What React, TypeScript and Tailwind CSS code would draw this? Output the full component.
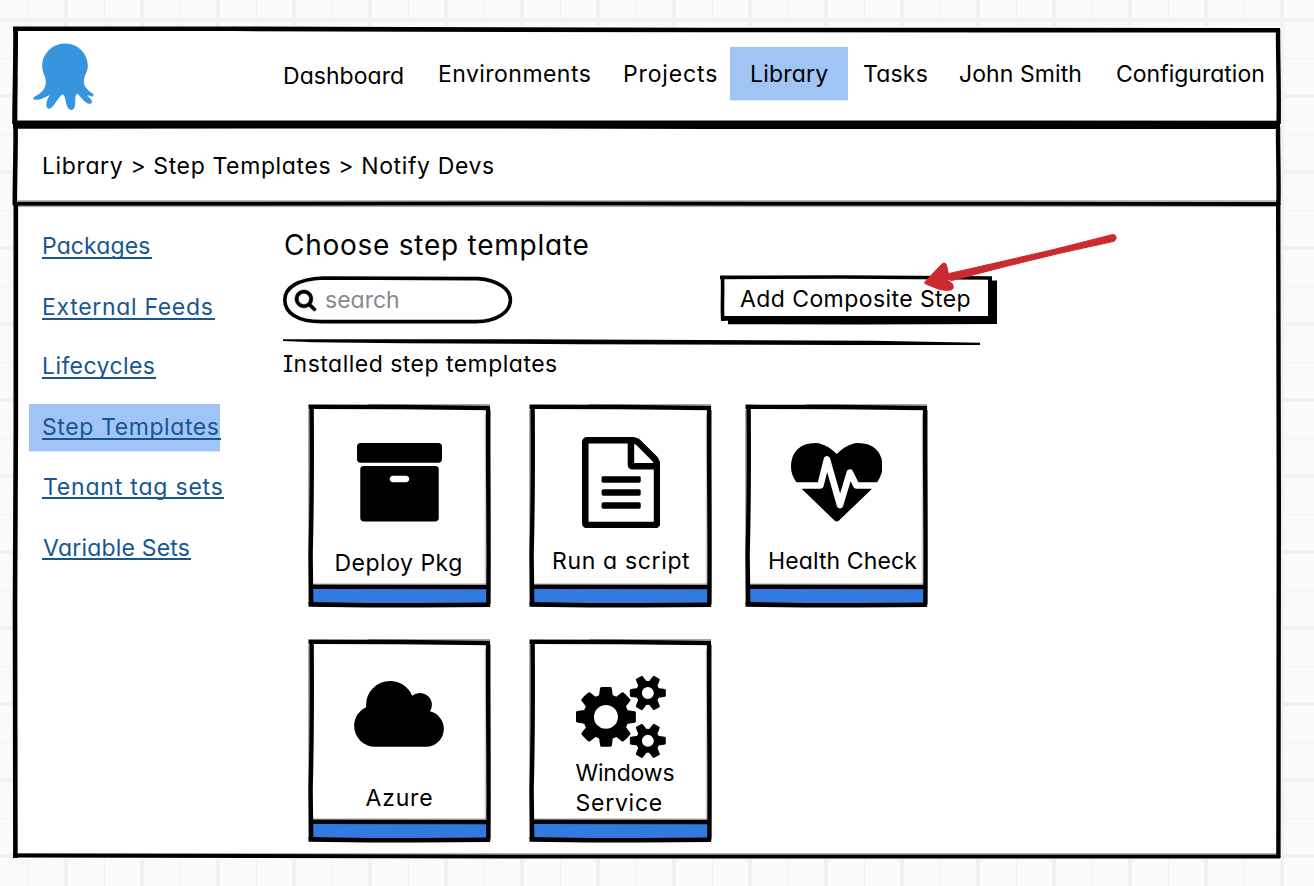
import type { ReactNode } from "react";

type Stroke = { d: string; w?: number; o?: number };

/* Hand-drawn ink strokes laid over a box. */
function Ink({ w, h, strokes }: { w: number; h: number; strokes: Stroke[] }) {
  return (
    <svg
      className="pointer-events-none absolute top-0 left-0 overflow-visible"
      width={w}
      height={h}
      viewBox={`0 0 ${w} ${h}`}
      fill="none"
      stroke="#000"
      aria-hidden="true"
    >
      {strokes.map((s) => (
        <path key={s.d} d={s.d} strokeWidth={s.w ?? 4} strokeOpacity={s.o ?? 1} />
      ))}
    </svg>
  );
}

const headerInk: Stroke[] = [
  { d: "M-1 2.8L220 2.8L400 3.4L700 4L1266 4.2", w: 4.6 },
  { d: "M1.6 2C1.8 40 0.6 70 0.6 98", w: 4.8 },
  { d: "M3.4 50V96", w: 1.4, o: 0.3 },
  { d: "M1264 3C1264 35 1265.2 65 1264.6 98", w: 4.4 },
  { d: "M-1 97L1266 97.2", w: 4.6 },
  { d: "M0 94.5H1266", w: 1, o: 0.3 },
];

const crumbInk: Stroke[] = [
  { d: "M-1 2.6L400 2.2L700 2.9L1266 2.8", w: 4.4 },
  { d: "M1.6 2C1.8 30 0.8 55 0.8 81", w: 4.6 },
  { d: "M1264 3C1264 30 1265 55 1264.4 81", w: 4.4 },
  { d: "M-1 79.7L500 79.6L1266 80", w: 4 },
  { d: "M4 77H1264", w: 2, o: 0.25 },
  { d: "M4 82.6H1264", w: 1, o: 0.35 },
];

const bodyInk: Stroke[] = [
  { d: "M1.8 0L1.8 230L1 400L1.4 654", w: 4.6 },
  { d: "M1264.2 0L1264.8 300L1264.4 654", w: 4.4 },
  { d: "M-1 651.6L500 652.6L900 652.4L1266 652.6", w: 4 },
  { d: "M4 649.6H1263", w: 1.4, o: 0.3 },
];

const cardInk: Stroke[] = [
  { d: "M0.5 2.8L90 3L182 4", w: 4.4 },
  { d: "M60 0.8H182", w: 1.4, o: 0.35 },
  { d: "M3.6 1C4 60 3.4 120 2.6 150L3.2 202", w: 4.4 },
  { d: "M0.9 6V200", w: 1.4, o: 0.4 },
  { d: "M180 3C179.6 60 181 130 180.2 202", w: 4.2 },
  { d: "M182.4 6V200", w: 1.2, o: 0.45 },
  { d: "M177.4 10V180", w: 1.4, o: 0.18 },
  { d: "M2 182.8L182 183", w: 4.4 },
  { d: "M4 180H178", w: 1.2, o: 0.35 },
  { d: "M0.5 200.4L60 201.2L110 201.2L182 200.8", w: 4.6 },
];

const headings = "whitespace-nowrap text-[23px] leading-7";

const navItems = [
  { label: "Dashboard", cls: "w-[155px] pt-[2px] tracking-[0.05px]" },
  { label: "Environments", cls: "w-[185px] tracking-[0.45px]" },
  { label: "Projects", cls: "w-[107px] tracking-[0.85px]" },
];

const navTail = [
  { label: "Tasks", cls: "ml-[15px] w-[96px] tracking-[0.2px]" },
  { label: "John Smith", cls: "w-[157px] tracking-[0.08px]" },
  { label: "Configuration", cls: "" },
];

const links = [
  { label: "Packages", cls: "mt-0 w-[110px] pt-px tracking-[0.1px]" },
  { label: "External Feeds", cls: "mt-[33px] w-[173px] pt-px tracking-[0.68px]" },
  { label: "Lifecycles", cls: "mt-[31px] w-[114px] pt-px tracking-[0.4px]" },
  { label: "Step Templates", cls: "mt-[33px] w-[179px] pt-px tracking-[0.6px]", active: true },
  { label: "Tenant tag sets", cls: "mt-[31px] w-[182px] pt-[2px] pl-px tracking-[0.8px]" },
  { label: "Variable Sets", cls: "mt-[33px] w-[149px] pt-[2px] pl-px tracking-[0.2px]" },
];

function Octopus() {
  return (
    <svg className="h-[68px] w-[61px]" viewBox="99.5 126.5 183 204" fill="#3795de" aria-hidden="true">
      <path d="M196 128C158 128 127 158 127 196C127 215 138 225 138 244C138 264 124 277 105 287C97 292 100 297 108 297C124 297 135 288 149 283C143 295 138 305 140 316C142 326 152 325 158 318C168 306 175 290 188 280C197 284 196 300 202 316C206 330 222 332 225 316C228 302 224 288 231 279C240 282 248 300 262 307C272 312 280 306 275 298C272 291 264 288 262 283C268 283 274 286 279 287C283 284 281 279 274 275C262 266 251 256 252 240C253 225 264 214 264 195C264 158 234 128 196 128Z" />
    </svg>
  );
}

const ArchiveIcon = (
  <svg className="mt-[39px] ml-[49px] h-[78.5px] w-[85px]" viewBox="64 128 1664 1536">
    <path d="M1088 832q0-26-19-45t-45-19h-256q-26 0-45 19t-19 45 19 45 45 19h256q26 0 45-19t19-45zm576-192v960q0 26-19 45t-45 19h-1408q-26 0-45-19t-19-45v-960q0-26 19-45t45-19h1408q26 0 45 19t19 45zm64-448v256q0 26-19 45t-45 19h-1536q-26 0-45-19t-19-45v-256q0-26 19-45t45-19h1536q26 0 45 19t19 45z" />
  </svg>
);

const ScriptIcon = (
  <svg className="mt-[32.7px] ml-[52.7px] h-[91.3px] w-[78.3px]" viewBox="128 0 1536 1792">
    <path d="M1596 380q28 28 48 76t20 88v1152q0 40-28 68t-68 28h-1344q-40 0-68-28t-28-68v-1600q0-40 28-68t68-28h896q40 0 88 20t76 48zm-444-244v376h376q-10-29-22-41l-313-313q-12-12-41-22zm384 1528v-1024h-416q-40 0-68-28t-28-68v-416h-768v1536h1280zm-1024-864q0-14 9-23t23-9h704q14 0 23 9t9 23v64q0 14-9 23t-23 9h-704q-14 0-23-9t-9-23v-64zm736 224q14 0 23 9t9 23v64q0 14-9 23t-23 9h-704q-14 0-23-9t-9-23v-64q0-14 9-23t23-9h704zm0 256q14 0 23 9t9 23v64q0 14-9 23t-23 9h-704q-14 0-23-9t-9-23v-64q0-14 9-23t23-9h704z" />
  </svg>
);

const HeartbeatIcon = (
  <svg className="mt-[39px] ml-[45.8px] h-[78.5px] w-[91.5px]" viewBox="0 128 1792 1536">
    <path d="M1280 1024h305q-5 6-10 10.5t-9 7.5l-3 4-623 600q-18 18-44 18t-44-18l-624-602q-5-2-21-20h369q22 0 39.5-13.5t22.5-34.5l70-281 190 667q6 20 23 33t39 13q21 0 38-13t23-33l146-485 56 112q18 35 57 35zm512-428q0 145-103 300h-369l-111-221q-8-17-25.5-27t-36.5-8q-45 5-56 46l-129 430-196-686q-6-20-23.5-33t-39.5-13-39 13.5-22 34.5l-116 464h-423q-103-155-103-300 0-220 127-344t351-124q62 0 126.5 21.5t120 58 95.5 68.5 76 68q36-36 76-68t95.5-68.5 120-58 126.5-21.5q224 0 351 124t127 344z" />
  </svg>
);

const CloudIcon = (
  <svg className="mt-[42px] ml-[46.3px] h-[65.8px] w-[90px]" viewBox="0 128 1920 1408">
    <path d="M1920 1152q0 159-112.5 271.5t-271.5 112.5h-1088q-185 0-316.5-131.5t-131.5-316.5q0-132 71-241.5t187-163.5q-2-28-2-43 0-212 150-362t362-150q158 0 286.5 88t187.5 230q70-62 166-62 106 0 181 75t75 181q0 75-41 138 129 30 213 134.5t84 239.5z" />
  </svg>
);

const CogsIcon = (
  <svg className="mt-[36px] ml-[47px] h-[83.8px] w-[89.8px]" viewBox="-64 0 1920 1792">
    <path d="M832 896q0-106-75-181t-181-75-181 75-75 181 75 181 181 75 181-75 75-181zm768 512q0-52-38-90t-90-38-90 38-38 90q0 53 37.5 90.5t90.5 37.5 90.5-37.5 37.5-90.5zm0-1024q0-52-38-90t-90-38-90 38-38 90q0 53 37.5 90.5t90.5 37.5 90.5-37.5 37.5-90.5zm-384 421v185q0 10-7 19.5t-16 10.5l-155 24q-11 35-32 76 34 48 90 115 7 11 7 20 0 12-7 19-23 30-82.5 89.5t-78.5 59.5q-11 0-21-7l-115-90q-37 19-77 31-11 108-23 155-7 24-30 24h-186q-11 0-20-7.5t-10-17.5l-23-153q-34-10-75-31l-118 89q-7 7-20 7-11 0-21-8-144-133-144-160 0-9 7-19 10-14 41-53t47-61q-23-44-35-82l-152-24q-10-1-17-9.5t-7-19.5v-185q0-10 7-19.5t16-10.5l155-24q11-35 32-76-34-48-90-115-7-11-7-20 0-12 7-20 22-30 82-89t79-59q11 0 21 7l115 90q34-18 77-32 11-108 23-154 7-24 30-24h186q11 0 20 7.5t10 17.5l23 153q34 10 75 31l118-89q8-7 20-7 11 0 21 8 144 133 144 160 0 8-7 19-12 16-42 54t-45 60q23 48 34 82l152 23q10 2 17 10.5t7 19.5zm640 533v140q0 16-149 31-12 27-30 52 51 113 51 138 0 4-4 7-122 71-124 71-8 0-46-47t-52-68q-20 2-30 2t-30-2q-14 21-52 68t-46 47q-2 0-124-71-4-3-4-7 0-25 51-138-18-25-30-52-149-15-149-31v-140q0-16 149-31 13-29 30-52-51-113-51-138 0-4 4-7 4-2 35-20t59-34 30-16q8 0 46 46.5t52 67.5q20-2 30-2t30 2q51-71 92-112l6-2q4 0 124 70 4 3 4 7 0 25-51 138 17 23 30 52 149 15 149 31zm0-1024v140q0 16-149 31-12 27-30 52 51 113 51 138 0 4-4 7-122 71-124 71-8 0-46-47t-52-68q-20 2-30 2t-30-2q-14 21-52 68t-46 47q-2 0-124-71-4-3-4-7 0-25 51-138-18-25-30-52-149-15-149-31v-140q0-16 149-31 13-29 30-52-51-113-51-138 0-4 4-7 4-2 35-20t59-34 30-16q8 0 46 46.5t52 67.5q20-2 30-2t30 2q51-71 92-112l6-2q4 0 124 70 4 3 4 7 0 25-51 138 17 23 30 52 149 15 149 31z" />
  </svg>
);

function Card({ icon, area, children }: { icon: ReactNode; area: string; children: ReactNode }) {
  return (
    <div className="relative flex h-[204px] w-[183px] flex-col">
      <div className={area}>{icon}</div>
      <div className="grow">{children}</div>
      <div className="mr-[3px] mb-[4px] ml-[3px] h-[16px] shrink-0 bg-[#327ae0]" />
      <Ink w={183} h={204} strokes={cardInk} />
    </div>
  );
}

function Arrow() {
  return (
    <svg className="pointer-events-none absolute -top-[43px] left-[201px] overflow-visible" width="200" height="60" viewBox="0 0 600 180" fill="#cb2b2f" stroke="#cb2b2f" strokeWidth="3" strokeLinejoin="round" aria-hidden="true">
      <path d="M573 5C586 3 590 18 579 25L420 60L260 99L90 143L78 134L82 122L240 86L400 49Z" />
      <path d="M12 146C10 149 12 153 16 154L52 168C64 172 80 173 90 171C99 169 98 156 92 150L80 142L82 122C80 112 78 98 74 92C70 89 66 90 62 94Z" />
    </svg>
  );
}

export default function App() {
  return (
    <div className="h-[886px] w-[1314px] overflow-hidden bg-[#fafafa] bg-[linear-gradient(90deg,#f1f1f1_4px,transparent_4px),linear-gradient(#f1f1f1_4px,transparent_4px),linear-gradient(90deg,#f2f2f2_1px,transparent_1px),linear-gradient(#f2f2f2_1px,transparent_1px)] bg-[size:76px_76px] bg-[position:64px_0,0_18px,28px_0,0_58px] pt-[26px] pl-[14px] font-['Inter','Open_Sans',sans-serif] text-black [font-feature-settings:'cv11','cv08']">
      <div className="flex h-[833px] w-[1266px] flex-col bg-white">
        <header className="relative flex h-[98px] shrink-0 items-start">
          <div className="w-[269px] pt-[16.5px] pl-[19.3px]">
            <Octopus />
          </div>
          <nav className="flex">
            {navItems.map((n) => (
              <div key={n.label} className={`${headings} mt-[34px] ${n.cls}`}>{n.label}</div>
            ))}
            <div className={`${headings} mt-[21px] h-[53px] w-[118px] bg-[#a0c5f5] pt-[13px] pl-5 tracking-[0.2px] shadow-[0_1px_0_#d5e5fb]`}>Library</div>
            {navTail.map((n) => (
              <div key={n.label} className={`${headings} mt-[34px] ${n.cls}`}>{n.label}</div>
            ))}
          </nav>
          <Ink w={1266} h={98} strokes={headerInk} />
        </header>

        <div className="relative h-[80px] shrink-0 pt-[28px] pl-[28px]">
          <div className={`${headings} tracking-[0.62px]`}>Library &gt; Step Templates &gt; Notify Devs</div>
          <Ink w={1266} h={80} strokes={crumbInk} />
        </div>

        <div className="relative flex grow">
          <aside className="w-[269px] shrink-0 pt-[27px] pl-[28px] text-[#17568f]">
            {links.map((l) => (
              <div key={l.label} className={`${headings} relative h-7 border-b-2 border-[#17568f] ${l.cls}`}>
                {l.active && (
                  <span className="absolute -top-2 -left-[13px] h-[47px] w-[191px] bg-[#a0c5f5] shadow-[0_1px_0_#d5e5fb]" />
                )}
                {l.active && <span className="absolute top-[26px] left-0 h-0.5 w-full bg-[#17568f]" />}
                <span className="relative">{l.label}</span>
              </div>
            ))}
          </aside>

          <main className="w-[715px] shrink-0 pt-[23px]">
            <h1 className="pl-px text-[28px] leading-9 tracking-[0.75px]">Choose step template</h1>
            <div className="mt-[13px] flex items-start">
              <div className="relative flex h-12 w-[229px] items-start pt-[13.8px] pl-3">
                <Ink
                  w={229}
                  h={48}
                  strokes={[
                    { d: "M40 2L195 2.6C215 4 227.4 13 227.4 24C227.4 36 214 45.4 193 45.6L40 45.6C13 46 1.8 36 1.8 24C1.8 12 14 3 40 2Z", w: 3.6 },
                  ]}
                />
                <svg className="h-[21px] w-[21px] overflow-visible" viewBox="64 128 1664 1664" stroke="#000" strokeWidth="50" aria-hidden="true">
                  <path d="M1216 832q0-185-131.5-316.5t-316.5-131.5-316.5 131.5-131.5 316.5 131.5 316.5 316.5 131.5 316.5-131.5 131.5-316.5zm512 832q0 52-38 90t-90 38q-54 0-90-38l-343-342q-179 124-399 124-143 0-273.5-55.5t-225-150-150-225-55.5-273.5 55.5-273.5 150-225 225-150 273.5-55.5 273.5 55.5 225 150 150 225 55.5 273.5q0 220-124 399l343 343q37 37 37 90z" />
                </svg>
                <span className={`${headings} -mt-[3.8px] ml-[9px] text-[#888890]`}>search</span>
              </div>
              <div className="relative ml-[208px] h-[48px] w-[277px] shrink-0 pt-[9px] pl-[20px]">
                <Ink
                  w={277}
                  h={48}
                  strokes={[
                    { d: "M0 1.4L120 1L272 2", w: 3.6 },
                    { d: "M2.4 0C3.2 15 1.8 30 2.8 45", w: 3.6 },
                    { d: "M270 1V42", w: 4 },
                    { d: "M1 42.4H274", w: 4.6 },
                    { d: "M8 45.2L140 45.4L277 45", w: 6 },
                    { d: "M274 4.5V48", w: 6 },
                  ]}
                />
                <div className={`${headings} tracking-[0.42px]`}>Add Composite Step</div>
                <Arrow />
              </div>
            </div>
            <svg className="mt-[15px] block h-[7px] w-[697px]" viewBox="0 0 697 7" aria-hidden="true">
              <path d="M0 0.2H240L420 1L590 1.8L697 3.8V6L560 6L300 5.2L120 4.2L30 3.2L0 2Z" />
            </svg>
            <h2 className={`${headings} mt-[4px] tracking-[0.48px]`}>Installed step templates</h2>
            <div className="mt-[26px] ml-[25px] grid auto-rows-[235px] grid-cols-[221px_216px_183px]">
              <Card icon={ArchiveIcon} area="flex h-[145px] items-start">
                <div className={`${headings} pl-[26.5px] tracking-[0.5px]`}>Deploy Pkg</div>
              </Card>
              <Card icon={ScriptIcon} area="flex h-[143px] items-start">
                <div className={`${headings} pl-[23px] tracking-[0.65px]`}>Run a script</div>
              </Card>
              <Card icon={HeartbeatIcon} area="flex h-[143px] items-start">
                <div className={`${headings} pl-[23px] tracking-[0.1px]`}>Health Check</div>
              </Card>
              <Card icon={CloudIcon} area="flex h-[145px] items-start">
                <div className={`${headings} pl-[57.5px] tracking-[0.8px]`}>Azure</div>
              </Card>
              <Card icon={CogsIcon} area="flex h-[119px] items-start">
                <div className="pl-[46.5px] text-[23px] leading-[30px]">
                  <div className="tracking-[-0.2px]">Windows</div>
                  <div className="tracking-[0.75px]">Service</div>
                </div>
              </Card>
            </div>
          </main>
          <Ink w={1266} h={655} strokes={bodyInk} />
        </div>
      </div>
    </div>
  );
}
